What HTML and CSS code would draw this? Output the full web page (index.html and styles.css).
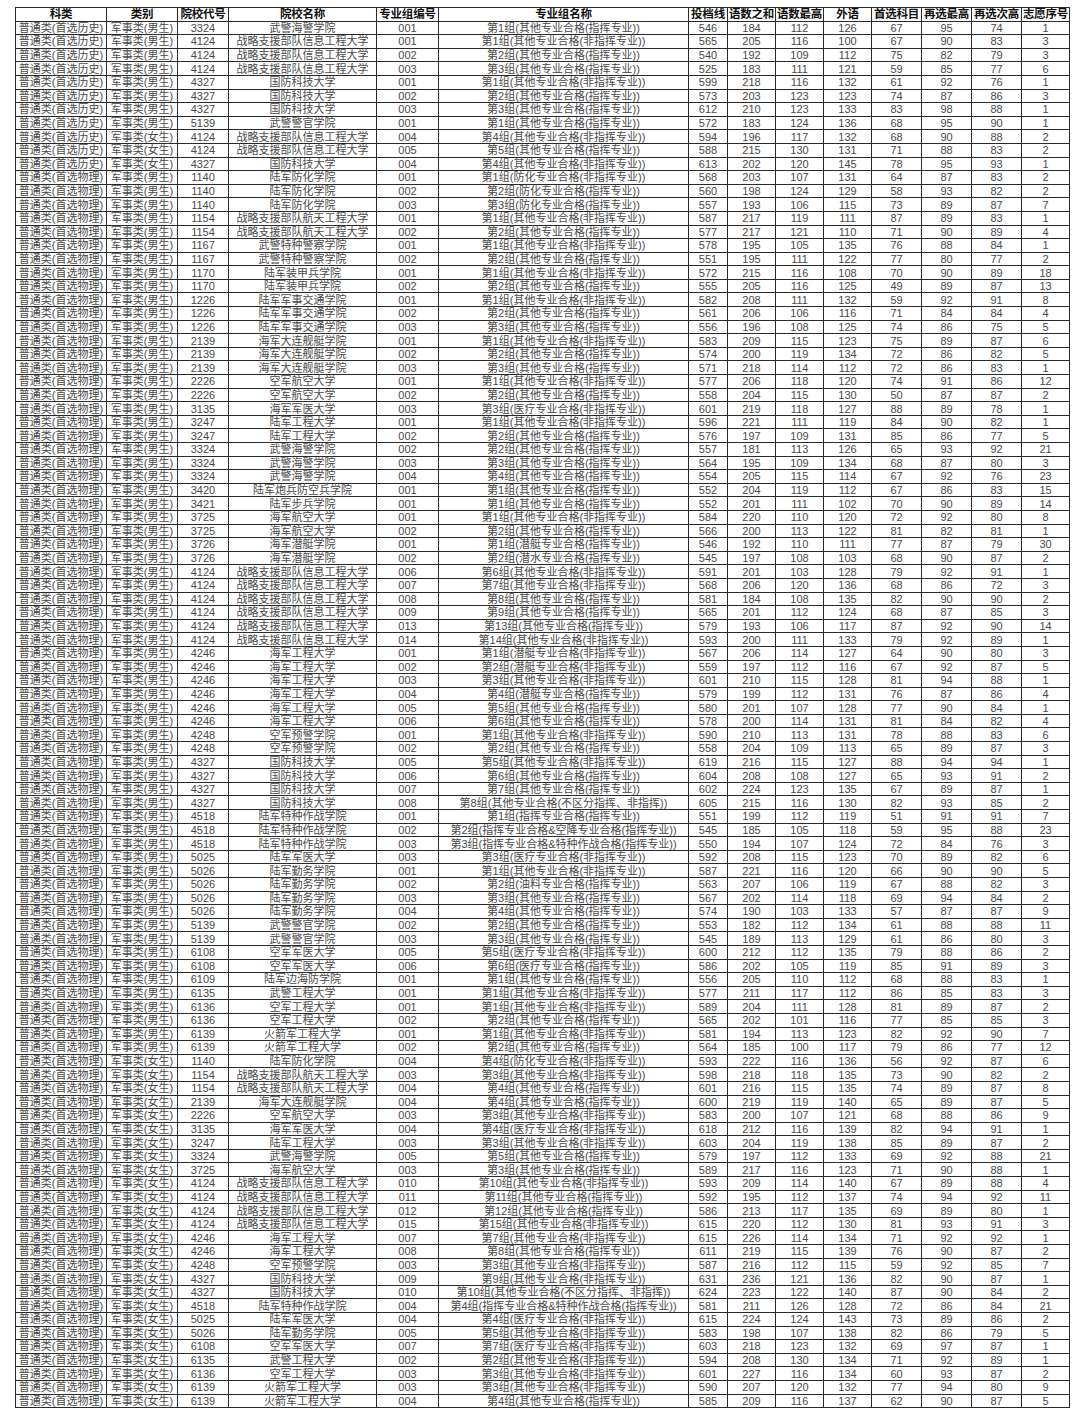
FILE: index.html
```html
<!DOCTYPE html>
<html lang="zh">
<head>
<meta charset="utf-8">
<title>军事类投档线</title>
<link rel="stylesheet" href="styles.css">
</head>
<body>
<table class="grid">
<colgroup>
<col class="c-kl"><col class="c-lb"><col class="c-dh"><col class="c-mc"><col class="c-bh"><col class="c-zy"><col class="c-n1"><col class="c-n"><col class="c-n"><col class="c-n"><col class="c-n5"><col class="c-n5"><col class="c-n5"><col class="c-n"></colgroup>
<thead>
<tr><th>科类</th><th>类别</th><th>院校代号</th><th>院校名称</th><th>专业组编号</th><th>专业组名称</th><th>投档线</th><th>语数之和</th><th>语数最高</th><th>外语</th><th>首选科目</th><th>再选最高</th><th>再选次高</th><th>志愿序号</th></tr>
</thead>
<tbody>
<tr><td>普通类(首选历史)</td><td>军事类(男生)</td><td>3324</td><td>武警海警学院</td><td>001</td><td>第1组(其他专业合格(指挥专业))</td><td>546</td><td>184</td><td>112</td><td>126</td><td>67</td><td>95</td><td>74</td><td>1</td></tr>
<tr><td>普通类(首选历史)</td><td>军事类(男生)</td><td>4124</td><td>战略支援部队信息工程大学</td><td>001</td><td>第1组(其他专业合格(非指挥专业))</td><td>565</td><td>205</td><td>116</td><td>100</td><td>67</td><td>90</td><td>83</td><td>3</td></tr>
<tr><td>普通类(首选历史)</td><td>军事类(男生)</td><td>4124</td><td>战略支援部队信息工程大学</td><td>002</td><td>第2组(其他专业合格(指挥专业))</td><td>540</td><td>192</td><td>109</td><td>112</td><td>75</td><td>82</td><td>79</td><td>3</td></tr>
<tr><td>普通类(首选历史)</td><td>军事类(男生)</td><td>4124</td><td>战略支援部队信息工程大学</td><td>003</td><td>第3组(其他专业合格(指挥专业))</td><td>525</td><td>183</td><td>111</td><td>121</td><td>59</td><td>85</td><td>77</td><td>6</td></tr>
<tr><td>普通类(首选历史)</td><td>军事类(男生)</td><td>4327</td><td>国防科技大学</td><td>001</td><td>第1组(其他专业合格(非指挥专业))</td><td>599</td><td>218</td><td>116</td><td>132</td><td>61</td><td>92</td><td>76</td><td>1</td></tr>
<tr><td>普通类(首选历史)</td><td>军事类(男生)</td><td>4327</td><td>国防科技大学</td><td>002</td><td>第2组(其他专业合格(指挥专业))</td><td>573</td><td>203</td><td>123</td><td>123</td><td>74</td><td>87</td><td>86</td><td>3</td></tr>
<tr><td>普通类(首选历史)</td><td>军事类(男生)</td><td>4327</td><td>国防科技大学</td><td>003</td><td>第3组(其他专业合格(指挥专业))</td><td>612</td><td>210</td><td>123</td><td>133</td><td>83</td><td>98</td><td>88</td><td>1</td></tr>
<tr><td>普通类(首选历史)</td><td>军事类(男生)</td><td>5139</td><td>武警警官学院</td><td>001</td><td>第1组(其他专业合格(指挥专业))</td><td>572</td><td>183</td><td>124</td><td>136</td><td>68</td><td>95</td><td>90</td><td>1</td></tr>
<tr><td>普通类(首选历史)</td><td>军事类(女生)</td><td>4124</td><td>战略支援部队信息工程大学</td><td>004</td><td>第4组(其他专业合格(非指挥专业))</td><td>594</td><td>196</td><td>117</td><td>132</td><td>68</td><td>90</td><td>88</td><td>2</td></tr>
<tr><td>普通类(首选历史)</td><td>军事类(女生)</td><td>4124</td><td>战略支援部队信息工程大学</td><td>005</td><td>第5组(其他专业合格(指挥专业))</td><td>588</td><td>215</td><td>130</td><td>131</td><td>71</td><td>88</td><td>83</td><td>2</td></tr>
<tr><td>普通类(首选历史)</td><td>军事类(女生)</td><td>4327</td><td>国防科技大学</td><td>004</td><td>第4组(其他专业合格(非指挥专业))</td><td>613</td><td>202</td><td>120</td><td>145</td><td>78</td><td>95</td><td>93</td><td>1</td></tr>
<tr><td>普通类(首选物理)</td><td>军事类(男生)</td><td>1140</td><td>陆军防化学院</td><td>001</td><td>第1组(防化专业合格(非指挥专业))</td><td>568</td><td>203</td><td>107</td><td>131</td><td>64</td><td>87</td><td>83</td><td>2</td></tr>
<tr><td>普通类(首选物理)</td><td>军事类(男生)</td><td>1140</td><td>陆军防化学院</td><td>002</td><td>第2组(防化专业合格(指挥专业))</td><td>560</td><td>198</td><td>124</td><td>129</td><td>58</td><td>93</td><td>82</td><td>2</td></tr>
<tr><td>普通类(首选物理)</td><td>军事类(男生)</td><td>1140</td><td>陆军防化学院</td><td>003</td><td>第3组(防化专业合格(指挥专业))</td><td>557</td><td>193</td><td>106</td><td>115</td><td>73</td><td>89</td><td>87</td><td>7</td></tr>
<tr><td>普通类(首选物理)</td><td>军事类(男生)</td><td>1154</td><td>战略支援部队航天工程大学</td><td>001</td><td>第1组(其他专业合格(非指挥专业))</td><td>587</td><td>217</td><td>119</td><td>111</td><td>87</td><td>89</td><td>83</td><td>1</td></tr>
<tr><td>普通类(首选物理)</td><td>军事类(男生)</td><td>1154</td><td>战略支援部队航天工程大学</td><td>002</td><td>第2组(其他专业合格(指挥专业))</td><td>577</td><td>217</td><td>121</td><td>110</td><td>71</td><td>90</td><td>89</td><td>4</td></tr>
<tr><td>普通类(首选物理)</td><td>军事类(男生)</td><td>1167</td><td>武警特种警察学院</td><td>001</td><td>第1组(其他专业合格(非指挥专业))</td><td>578</td><td>195</td><td>105</td><td>135</td><td>76</td><td>88</td><td>84</td><td>1</td></tr>
<tr><td>普通类(首选物理)</td><td>军事类(男生)</td><td>1167</td><td>武警特种警察学院</td><td>002</td><td>第2组(其他专业合格(指挥专业))</td><td>551</td><td>195</td><td>111</td><td>122</td><td>77</td><td>80</td><td>77</td><td>2</td></tr>
<tr><td>普通类(首选物理)</td><td>军事类(男生)</td><td>1170</td><td>陆军装甲兵学院</td><td>001</td><td>第1组(其他专业合格(非指挥专业))</td><td>572</td><td>215</td><td>116</td><td>108</td><td>70</td><td>90</td><td>89</td><td>18</td></tr>
<tr><td>普通类(首选物理)</td><td>军事类(男生)</td><td>1170</td><td>陆军装甲兵学院</td><td>002</td><td>第2组(其他专业合格(指挥专业))</td><td>555</td><td>205</td><td>116</td><td>125</td><td>49</td><td>89</td><td>87</td><td>13</td></tr>
<tr><td>普通类(首选物理)</td><td>军事类(男生)</td><td>1226</td><td>陆军军事交通学院</td><td>001</td><td>第1组(其他专业合格(非指挥专业))</td><td>582</td><td>208</td><td>111</td><td>132</td><td>59</td><td>92</td><td>91</td><td>8</td></tr>
<tr><td>普通类(首选物理)</td><td>军事类(男生)</td><td>1226</td><td>陆军军事交通学院</td><td>002</td><td>第2组(其他专业合格(指挥专业))</td><td>561</td><td>206</td><td>106</td><td>116</td><td>71</td><td>84</td><td>84</td><td>4</td></tr>
<tr><td>普通类(首选物理)</td><td>军事类(男生)</td><td>1226</td><td>陆军军事交通学院</td><td>003</td><td>第3组(其他专业合格(指挥专业))</td><td>556</td><td>196</td><td>108</td><td>125</td><td>74</td><td>86</td><td>75</td><td>5</td></tr>
<tr><td>普通类(首选物理)</td><td>军事类(男生)</td><td>2139</td><td>海军大连舰艇学院</td><td>001</td><td>第1组(其他专业合格(非指挥专业))</td><td>583</td><td>209</td><td>115</td><td>123</td><td>75</td><td>89</td><td>87</td><td>6</td></tr>
<tr><td>普通类(首选物理)</td><td>军事类(男生)</td><td>2139</td><td>海军大连舰艇学院</td><td>002</td><td>第2组(其他专业合格(指挥专业))</td><td>574</td><td>200</td><td>119</td><td>134</td><td>72</td><td>86</td><td>82</td><td>5</td></tr>
<tr><td>普通类(首选物理)</td><td>军事类(男生)</td><td>2139</td><td>海军大连舰艇学院</td><td>003</td><td>第3组(其他专业合格(指挥专业))</td><td>571</td><td>218</td><td>114</td><td>112</td><td>72</td><td>86</td><td>83</td><td>1</td></tr>
<tr><td>普通类(首选物理)</td><td>军事类(男生)</td><td>2226</td><td>空军航空大学</td><td>001</td><td>第1组(其他专业合格(非指挥专业))</td><td>577</td><td>206</td><td>118</td><td>120</td><td>74</td><td>91</td><td>86</td><td>12</td></tr>
<tr><td>普通类(首选物理)</td><td>军事类(男生)</td><td>2226</td><td>空军航空大学</td><td>002</td><td>第2组(其他专业合格(指挥专业))</td><td>558</td><td>204</td><td>115</td><td>130</td><td>50</td><td>87</td><td>87</td><td>2</td></tr>
<tr><td>普通类(首选物理)</td><td>军事类(男生)</td><td>3135</td><td>海军军医大学</td><td>003</td><td>第3组(医疗专业合格(非指挥专业))</td><td>601</td><td>219</td><td>118</td><td>127</td><td>88</td><td>89</td><td>78</td><td>1</td></tr>
<tr><td>普通类(首选物理)</td><td>军事类(男生)</td><td>3247</td><td>陆军工程大学</td><td>001</td><td>第1组(其他专业合格(非指挥专业))</td><td>596</td><td>221</td><td>111</td><td>119</td><td>84</td><td>90</td><td>82</td><td>1</td></tr>
<tr><td>普通类(首选物理)</td><td>军事类(男生)</td><td>3247</td><td>陆军工程大学</td><td>002</td><td>第2组(其他专业合格(指挥专业))</td><td>576</td><td>197</td><td>109</td><td>131</td><td>85</td><td>86</td><td>77</td><td>5</td></tr>
<tr><td>普通类(首选物理)</td><td>军事类(男生)</td><td>3324</td><td>武警海警学院</td><td>002</td><td>第2组(其他专业合格(指挥专业))</td><td>557</td><td>181</td><td>113</td><td>126</td><td>65</td><td>93</td><td>92</td><td>21</td></tr>
<tr><td>普通类(首选物理)</td><td>军事类(男生)</td><td>3324</td><td>武警海警学院</td><td>003</td><td>第3组(其他专业合格(指挥专业))</td><td>564</td><td>195</td><td>109</td><td>134</td><td>68</td><td>87</td><td>80</td><td>3</td></tr>
<tr><td>普通类(首选物理)</td><td>军事类(男生)</td><td>3324</td><td>武警海警学院</td><td>004</td><td>第4组(其他专业合格(指挥专业))</td><td>554</td><td>205</td><td>115</td><td>114</td><td>67</td><td>92</td><td>76</td><td>23</td></tr>
<tr><td>普通类(首选物理)</td><td>军事类(男生)</td><td>3420</td><td>陆军炮兵防空兵学院</td><td>001</td><td>第1组(其他专业合格(指挥专业))</td><td>552</td><td>204</td><td>119</td><td>112</td><td>67</td><td>86</td><td>83</td><td>15</td></tr>
<tr><td>普通类(首选物理)</td><td>军事类(男生)</td><td>3421</td><td>陆军步兵学院</td><td>001</td><td>第1组(其他专业合格(指挥专业))</td><td>552</td><td>201</td><td>111</td><td>102</td><td>70</td><td>90</td><td>89</td><td>14</td></tr>
<tr><td>普通类(首选物理)</td><td>军事类(男生)</td><td>3725</td><td>海军航空大学</td><td>001</td><td>第1组(其他专业合格(非指挥专业))</td><td>584</td><td>220</td><td>110</td><td>120</td><td>72</td><td>92</td><td>80</td><td>8</td></tr>
<tr><td>普通类(首选物理)</td><td>军事类(男生)</td><td>3725</td><td>海军航空大学</td><td>002</td><td>第2组(其他专业合格(指挥专业))</td><td>566</td><td>200</td><td>113</td><td>122</td><td>81</td><td>82</td><td>81</td><td>1</td></tr>
<tr><td>普通类(首选物理)</td><td>军事类(男生)</td><td>3726</td><td>海军潜艇学院</td><td>001</td><td>第1组(潜艇专业合格(指挥专业))</td><td>546</td><td>192</td><td>110</td><td>111</td><td>77</td><td>87</td><td>79</td><td>30</td></tr>
<tr><td>普通类(首选物理)</td><td>军事类(男生)</td><td>3726</td><td>海军潜艇学院</td><td>002</td><td>第2组(潜水专业合格(指挥专业))</td><td>545</td><td>197</td><td>108</td><td>103</td><td>68</td><td>90</td><td>87</td><td>2</td></tr>
<tr><td>普通类(首选物理)</td><td>军事类(男生)</td><td>4124</td><td>战略支援部队信息工程大学</td><td>006</td><td>第6组(其他专业合格(非指挥专业))</td><td>591</td><td>201</td><td>103</td><td>128</td><td>79</td><td>92</td><td>91</td><td>1</td></tr>
<tr><td>普通类(首选物理)</td><td>军事类(男生)</td><td>4124</td><td>战略支援部队信息工程大学</td><td>007</td><td>第7组(其他专业合格(非指挥专业))</td><td>568</td><td>206</td><td>120</td><td>136</td><td>68</td><td>86</td><td>72</td><td>3</td></tr>
<tr><td>普通类(首选物理)</td><td>军事类(男生)</td><td>4124</td><td>战略支援部队信息工程大学</td><td>008</td><td>第8组(其他专业合格(指挥专业))</td><td>581</td><td>184</td><td>108</td><td>135</td><td>82</td><td>90</td><td>90</td><td>2</td></tr>
<tr><td>普通类(首选物理)</td><td>军事类(男生)</td><td>4124</td><td>战略支援部队信息工程大学</td><td>009</td><td>第9组(其他专业合格(指挥专业))</td><td>565</td><td>201</td><td>112</td><td>124</td><td>68</td><td>87</td><td>85</td><td>3</td></tr>
<tr><td>普通类(首选物理)</td><td>军事类(男生)</td><td>4124</td><td>战略支援部队信息工程大学</td><td>013</td><td>第13组(其他专业合格(指挥专业))</td><td>579</td><td>193</td><td>106</td><td>117</td><td>87</td><td>92</td><td>90</td><td>14</td></tr>
<tr><td>普通类(首选物理)</td><td>军事类(男生)</td><td>4124</td><td>战略支援部队信息工程大学</td><td>014</td><td>第14组(其他专业合格(非指挥专业))</td><td>593</td><td>200</td><td>111</td><td>133</td><td>79</td><td>92</td><td>89</td><td>1</td></tr>
<tr><td>普通类(首选物理)</td><td>军事类(男生)</td><td>4246</td><td>海军工程大学</td><td>001</td><td>第1组(潜艇专业合格(非指挥专业))</td><td>567</td><td>206</td><td>114</td><td>127</td><td>64</td><td>90</td><td>80</td><td>3</td></tr>
<tr><td>普通类(首选物理)</td><td>军事类(男生)</td><td>4246</td><td>海军工程大学</td><td>002</td><td>第2组(潜艇专业合格(非指挥专业))</td><td>559</td><td>197</td><td>112</td><td>116</td><td>67</td><td>92</td><td>87</td><td>5</td></tr>
<tr><td>普通类(首选物理)</td><td>军事类(男生)</td><td>4246</td><td>海军工程大学</td><td>003</td><td>第3组(其他专业合格(非指挥专业))</td><td>601</td><td>210</td><td>115</td><td>128</td><td>81</td><td>94</td><td>88</td><td>1</td></tr>
<tr><td>普通类(首选物理)</td><td>军事类(男生)</td><td>4246</td><td>海军工程大学</td><td>004</td><td>第4组(潜艇专业合格(指挥专业))</td><td>579</td><td>199</td><td>112</td><td>131</td><td>76</td><td>87</td><td>86</td><td>4</td></tr>
<tr><td>普通类(首选物理)</td><td>军事类(男生)</td><td>4246</td><td>海军工程大学</td><td>005</td><td>第5组(其他专业合格(指挥专业))</td><td>580</td><td>201</td><td>107</td><td>128</td><td>77</td><td>90</td><td>84</td><td>1</td></tr>
<tr><td>普通类(首选物理)</td><td>军事类(男生)</td><td>4246</td><td>海军工程大学</td><td>006</td><td>第6组(其他专业合格(指挥专业))</td><td>578</td><td>200</td><td>114</td><td>131</td><td>81</td><td>84</td><td>82</td><td>4</td></tr>
<tr><td>普通类(首选物理)</td><td>军事类(男生)</td><td>4248</td><td>空军预警学院</td><td>001</td><td>第1组(其他专业合格(非指挥专业))</td><td>590</td><td>210</td><td>113</td><td>131</td><td>78</td><td>88</td><td>83</td><td>6</td></tr>
<tr><td>普通类(首选物理)</td><td>军事类(男生)</td><td>4248</td><td>空军预警学院</td><td>002</td><td>第2组(其他专业合格(指挥专业))</td><td>558</td><td>204</td><td>109</td><td>113</td><td>65</td><td>89</td><td>87</td><td>3</td></tr>
<tr><td>普通类(首选物理)</td><td>军事类(男生)</td><td>4327</td><td>国防科技大学</td><td>005</td><td>第5组(其他专业合格(非指挥专业))</td><td>619</td><td>216</td><td>115</td><td>127</td><td>88</td><td>94</td><td>94</td><td>1</td></tr>
<tr><td>普通类(首选物理)</td><td>军事类(男生)</td><td>4327</td><td>国防科技大学</td><td>006</td><td>第6组(其他专业合格(指挥专业))</td><td>604</td><td>208</td><td>108</td><td>127</td><td>65</td><td>93</td><td>91</td><td>2</td></tr>
<tr><td>普通类(首选物理)</td><td>军事类(男生)</td><td>4327</td><td>国防科技大学</td><td>007</td><td>第7组(其他专业合格(指挥专业))</td><td>602</td><td>224</td><td>123</td><td>135</td><td>67</td><td>89</td><td>87</td><td>1</td></tr>
<tr><td>普通类(首选物理)</td><td>军事类(男生)</td><td>4327</td><td>国防科技大学</td><td>008</td><td>第8组(其他专业合格(不区分指挥、非指挥))</td><td>605</td><td>215</td><td>116</td><td>130</td><td>82</td><td>93</td><td>85</td><td>2</td></tr>
<tr><td>普通类(首选物理)</td><td>军事类(男生)</td><td>4518</td><td>陆军特种作战学院</td><td>001</td><td>第1组(指挥专业合格(指挥专业))</td><td>551</td><td>199</td><td>112</td><td>119</td><td>51</td><td>91</td><td>91</td><td>7</td></tr>
<tr><td>普通类(首选物理)</td><td>军事类(男生)</td><td>4518</td><td>陆军特种作战学院</td><td>002</td><td>第2组(指挥专业合格&amp;空降专业合格(指挥专业))</td><td>545</td><td>185</td><td>105</td><td>118</td><td>59</td><td>95</td><td>88</td><td>23</td></tr>
<tr><td>普通类(首选物理)</td><td>军事类(男生)</td><td>4518</td><td>陆军特种作战学院</td><td>003</td><td>第3组(指挥专业合格&amp;特种作战合格(指挥专业))</td><td>550</td><td>194</td><td>107</td><td>124</td><td>72</td><td>84</td><td>76</td><td>3</td></tr>
<tr><td>普通类(首选物理)</td><td>军事类(男生)</td><td>5025</td><td>陆军军医大学</td><td>003</td><td>第3组(医疗专业合格(非指挥专业))</td><td>592</td><td>208</td><td>115</td><td>123</td><td>70</td><td>89</td><td>82</td><td>6</td></tr>
<tr><td>普通类(首选物理)</td><td>军事类(男生)</td><td>5026</td><td>陆军勤务学院</td><td>001</td><td>第1组(其他专业合格(非指挥专业))</td><td>587</td><td>221</td><td>116</td><td>120</td><td>66</td><td>90</td><td>90</td><td>5</td></tr>
<tr><td>普通类(首选物理)</td><td>军事类(男生)</td><td>5026</td><td>陆军勤务学院</td><td>002</td><td>第2组(油料专业合格(指挥专业))</td><td>563</td><td>207</td><td>106</td><td>119</td><td>67</td><td>88</td><td>82</td><td>3</td></tr>
<tr><td>普通类(首选物理)</td><td>军事类(男生)</td><td>5026</td><td>陆军勤务学院</td><td>003</td><td>第3组(其他专业合格(指挥专业))</td><td>567</td><td>202</td><td>114</td><td>118</td><td>69</td><td>94</td><td>84</td><td>2</td></tr>
<tr><td>普通类(首选物理)</td><td>军事类(男生)</td><td>5026</td><td>陆军勤务学院</td><td>004</td><td>第4组(其他专业合格(指挥专业))</td><td>574</td><td>190</td><td>103</td><td>133</td><td>57</td><td>87</td><td>87</td><td>9</td></tr>
<tr><td>普通类(首选物理)</td><td>军事类(男生)</td><td>5139</td><td>武警警官学院</td><td>002</td><td>第2组(其他专业合格(指挥专业))</td><td>553</td><td>182</td><td>112</td><td>134</td><td>61</td><td>88</td><td>88</td><td>11</td></tr>
<tr><td>普通类(首选物理)</td><td>军事类(男生)</td><td>5139</td><td>武警警官学院</td><td>003</td><td>第3组(其他专业合格(指挥专业))</td><td>545</td><td>189</td><td>113</td><td>129</td><td>61</td><td>86</td><td>80</td><td>3</td></tr>
<tr><td>普通类(首选物理)</td><td>军事类(男生)</td><td>6108</td><td>空军军医大学</td><td>005</td><td>第5组(医疗专业合格(非指挥专业))</td><td>600</td><td>212</td><td>112</td><td>135</td><td>79</td><td>88</td><td>86</td><td>2</td></tr>
<tr><td>普通类(首选物理)</td><td>军事类(男生)</td><td>6108</td><td>空军军医大学</td><td>006</td><td>第6组(医疗专业合格(指挥专业))</td><td>586</td><td>202</td><td>105</td><td>119</td><td>85</td><td>91</td><td>89</td><td>3</td></tr>
<tr><td>普通类(首选物理)</td><td>军事类(男生)</td><td>6109</td><td>陆军边海防学院</td><td>001</td><td>第1组(其他专业合格(指挥专业))</td><td>556</td><td>205</td><td>110</td><td>112</td><td>68</td><td>88</td><td>83</td><td>1</td></tr>
<tr><td>普通类(首选物理)</td><td>军事类(男生)</td><td>6135</td><td>武警工程大学</td><td>001</td><td>第1组(其他专业合格(非指挥专业))</td><td>577</td><td>211</td><td>117</td><td>112</td><td>86</td><td>85</td><td>83</td><td>3</td></tr>
<tr><td>普通类(首选物理)</td><td>军事类(男生)</td><td>6136</td><td>空军工程大学</td><td>001</td><td>第1组(其他专业合格(非指挥专业))</td><td>589</td><td>204</td><td>111</td><td>128</td><td>81</td><td>89</td><td>87</td><td>2</td></tr>
<tr><td>普通类(首选物理)</td><td>军事类(男生)</td><td>6136</td><td>空军工程大学</td><td>002</td><td>第2组(其他专业合格(指挥专业))</td><td>565</td><td>202</td><td>101</td><td>116</td><td>77</td><td>85</td><td>85</td><td>3</td></tr>
<tr><td>普通类(首选物理)</td><td>军事类(男生)</td><td>6139</td><td>火箭军工程大学</td><td>001</td><td>第1组(其他专业合格(非指挥专业))</td><td>581</td><td>194</td><td>113</td><td>123</td><td>82</td><td>92</td><td>90</td><td>7</td></tr>
<tr><td>普通类(首选物理)</td><td>军事类(男生)</td><td>6139</td><td>火箭军工程大学</td><td>002</td><td>第2组(其他专业合格(指挥专业))</td><td>564</td><td>185</td><td>100</td><td>117</td><td>79</td><td>86</td><td>77</td><td>12</td></tr>
<tr><td>普通类(首选物理)</td><td>军事类(女生)</td><td>1140</td><td>陆军防化学院</td><td>004</td><td>第4组(防化专业合格(非指挥专业))</td><td>593</td><td>222</td><td>116</td><td>136</td><td>56</td><td>92</td><td>87</td><td>6</td></tr>
<tr><td>普通类(首选物理)</td><td>军事类(女生)</td><td>1154</td><td>战略支援部队航天工程大学</td><td>003</td><td>第3组(其他专业合格(非指挥专业))</td><td>598</td><td>218</td><td>118</td><td>135</td><td>73</td><td>90</td><td>82</td><td>2</td></tr>
<tr><td>普通类(首选物理)</td><td>军事类(女生)</td><td>1154</td><td>战略支援部队航天工程大学</td><td>004</td><td>第4组(其他专业合格(指挥专业))</td><td>601</td><td>216</td><td>115</td><td>135</td><td>74</td><td>89</td><td>87</td><td>8</td></tr>
<tr><td>普通类(首选物理)</td><td>军事类(女生)</td><td>2139</td><td>海军大连舰艇学院</td><td>004</td><td>第4组(其他专业合格(指挥专业))</td><td>600</td><td>219</td><td>119</td><td>140</td><td>65</td><td>89</td><td>87</td><td>5</td></tr>
<tr><td>普通类(首选物理)</td><td>军事类(女生)</td><td>2226</td><td>空军航空大学</td><td>003</td><td>第3组(其他专业合格(非指挥专业))</td><td>583</td><td>200</td><td>107</td><td>121</td><td>68</td><td>88</td><td>86</td><td>9</td></tr>
<tr><td>普通类(首选物理)</td><td>军事类(女生)</td><td>3135</td><td>海军军医大学</td><td>004</td><td>第4组(医疗专业合格(非指挥专业))</td><td>618</td><td>212</td><td>116</td><td>139</td><td>82</td><td>94</td><td>91</td><td>1</td></tr>
<tr><td>普通类(首选物理)</td><td>军事类(女生)</td><td>3247</td><td>陆军工程大学</td><td>003</td><td>第3组(其他专业合格(非指挥专业))</td><td>603</td><td>204</td><td>119</td><td>138</td><td>85</td><td>89</td><td>87</td><td>2</td></tr>
<tr><td>普通类(首选物理)</td><td>军事类(女生)</td><td>3324</td><td>武警海警学院</td><td>005</td><td>第5组(其他专业合格(指挥专业))</td><td>579</td><td>197</td><td>112</td><td>133</td><td>69</td><td>92</td><td>88</td><td>21</td></tr>
<tr><td>普通类(首选物理)</td><td>军事类(女生)</td><td>3725</td><td>海军航空大学</td><td>003</td><td>第3组(其他专业合格(指挥专业))</td><td>589</td><td>217</td><td>116</td><td>123</td><td>71</td><td>90</td><td>88</td><td>1</td></tr>
<tr><td>普通类(首选物理)</td><td>军事类(女生)</td><td>4124</td><td>战略支援部队信息工程大学</td><td>010</td><td>第10组(其他专业合格(非指挥专业))</td><td>593</td><td>209</td><td>114</td><td>140</td><td>67</td><td>89</td><td>88</td><td>4</td></tr>
<tr><td>普通类(首选物理)</td><td>军事类(女生)</td><td>4124</td><td>战略支援部队信息工程大学</td><td>011</td><td>第11组(其他专业合格(指挥专业))</td><td>592</td><td>195</td><td>112</td><td>137</td><td>74</td><td>94</td><td>92</td><td>11</td></tr>
<tr><td>普通类(首选物理)</td><td>军事类(女生)</td><td>4124</td><td>战略支援部队信息工程大学</td><td>012</td><td>第12组(其他专业合格(指挥专业))</td><td>586</td><td>213</td><td>117</td><td>135</td><td>69</td><td>89</td><td>80</td><td>1</td></tr>
<tr><td>普通类(首选物理)</td><td>军事类(女生)</td><td>4124</td><td>战略支援部队信息工程大学</td><td>015</td><td>第15组(其他专业合格(非指挥专业))</td><td>615</td><td>220</td><td>112</td><td>130</td><td>81</td><td>93</td><td>91</td><td>3</td></tr>
<tr><td>普通类(首选物理)</td><td>军事类(女生)</td><td>4246</td><td>海军工程大学</td><td>007</td><td>第7组(其他专业合格(非指挥专业))</td><td>615</td><td>226</td><td>114</td><td>134</td><td>71</td><td>92</td><td>92</td><td>1</td></tr>
<tr><td>普通类(首选物理)</td><td>军事类(女生)</td><td>4246</td><td>海军工程大学</td><td>008</td><td>第8组(其他专业合格(指挥专业))</td><td>611</td><td>219</td><td>115</td><td>139</td><td>76</td><td>90</td><td>87</td><td>2</td></tr>
<tr><td>普通类(首选物理)</td><td>军事类(女生)</td><td>4248</td><td>空军预警学院</td><td>003</td><td>第3组(其他专业合格(非指挥专业))</td><td>587</td><td>216</td><td>112</td><td>115</td><td>59</td><td>92</td><td>85</td><td>7</td></tr>
<tr><td>普通类(首选物理)</td><td>军事类(女生)</td><td>4327</td><td>国防科技大学</td><td>009</td><td>第9组(其他专业合格(非指挥专业))</td><td>631</td><td>236</td><td>121</td><td>136</td><td>82</td><td>90</td><td>87</td><td>1</td></tr>
<tr><td>普通类(首选物理)</td><td>军事类(女生)</td><td>4327</td><td>国防科技大学</td><td>010</td><td>第10组(其他专业合格(不区分指挥、非指挥))</td><td>624</td><td>223</td><td>122</td><td>140</td><td>87</td><td>90</td><td>84</td><td>2</td></tr>
<tr><td>普通类(首选物理)</td><td>军事类(女生)</td><td>4518</td><td>陆军特种作战学院</td><td>004</td><td>第4组(指挥专业合格&amp;特种作战合格(指挥专业))</td><td>581</td><td>211</td><td>126</td><td>128</td><td>72</td><td>86</td><td>84</td><td>21</td></tr>
<tr><td>普通类(首选物理)</td><td>军事类(女生)</td><td>5025</td><td>陆军军医大学</td><td>004</td><td>第4组(医疗专业合格(非指挥专业))</td><td>615</td><td>224</td><td>124</td><td>143</td><td>73</td><td>89</td><td>86</td><td>2</td></tr>
<tr><td>普通类(首选物理)</td><td>军事类(女生)</td><td>5026</td><td>陆军勤务学院</td><td>005</td><td>第5组(其他专业合格(非指挥专业))</td><td>583</td><td>198</td><td>107</td><td>138</td><td>82</td><td>86</td><td>79</td><td>5</td></tr>
<tr><td>普通类(首选物理)</td><td>军事类(女生)</td><td>6108</td><td>空军军医大学</td><td>007</td><td>第7组(医疗专业合格(非指挥专业))</td><td>603</td><td>218</td><td>123</td><td>132</td><td>69</td><td>97</td><td>87</td><td>1</td></tr>
<tr><td>普通类(首选物理)</td><td>军事类(女生)</td><td>6135</td><td>武警工程大学</td><td>002</td><td>第2组(其他专业合格(非指挥专业))</td><td>594</td><td>208</td><td>130</td><td>134</td><td>71</td><td>92</td><td>89</td><td>1</td></tr>
<tr><td>普通类(首选物理)</td><td>军事类(女生)</td><td>6136</td><td>空军工程大学</td><td>003</td><td>第3组(其他专业合格(非指挥专业))</td><td>601</td><td>227</td><td>116</td><td>134</td><td>60</td><td>93</td><td>87</td><td>2</td></tr>
<tr><td>普通类(首选物理)</td><td>军事类(女生)</td><td>6139</td><td>火箭军工程大学</td><td>003</td><td>第3组(其他专业合格(非指挥专业))</td><td>590</td><td>207</td><td>120</td><td>132</td><td>77</td><td>94</td><td>80</td><td>9</td></tr>
<tr><td>普通类(首选物理)</td><td>军事类(女生)</td><td>6139</td><td>火箭军工程大学</td><td>004</td><td>第4组(其他专业合格(指挥专业))</td><td>585</td><td>209</td><td>116</td><td>137</td><td>62</td><td>90</td><td>87</td><td>5</td></tr>
</tbody>
</table>
</body>
</html>
```

FILE: styles.css
```css
html, body {
  margin: 0;
  padding: 0;
  background: #ffffff;
}

body {
  padding: 7px 0 0 15px;
  font-family: "Liberation Sans", "Noto Sans CJK SC", sans-serif;
}

.grid {
  border-collapse: collapse;
  table-layout: fixed;
  width: 1053px;
}

.c-kl { width: 91px; }
.c-lb { width: 71px; }
.c-dh { width: 51px; }
.c-mc { width: 148px; }
.c-bh { width: 62px; }
.c-zy { width: 250px; }
.c-n1 { width: 39px; }
.c-n { width: 48px; }
.c-n5 { width: 50px; }

.grid th,
.grid td {
  border: 1px solid #2a2a2a;
  padding: 0;
  text-align: center;
  white-space: nowrap;
  overflow: hidden;
  height: 12.6px;
  line-height: 10px;
  vertical-align: middle;
}

.grid th {
  font-size: 11.5px;
  font-weight: bold;
  color: #111111;
  letter-spacing: -0.2px;
}

.grid td {
  font-size: 11px;
  color: #4a4a4a;
}
```
